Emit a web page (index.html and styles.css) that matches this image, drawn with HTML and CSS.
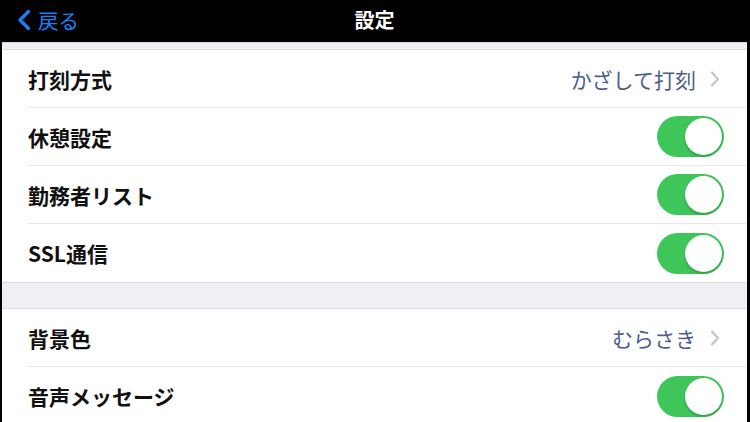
FILE: index.html
```html
<!doctype html>
<html lang="ja">
<head>
    <meta charset="UTF-8">
    <title>設定</title>
    <link rel="stylesheet" href="styles.css">
</head>
<body>
<div class="screen">
    <div class="navBar">
        <div class="backBtn">
            <svg class="backIcon" width="14" height="20" viewBox="0 0 14 20">
                <path d="M11.5 1.5 L3 10 L11.5 18.5" fill="none" stroke="#1b80f5" stroke-width="3.2" stroke-linecap="round" stroke-linejoin="round"/>
            </svg>
            <span>戻る</span>
        </div>
        <div class="navTitle">設定</div>
    </div>

    <div class="gap topGap"></div>
    <ul class="group">
        <li class="row">
            <span class="label">打刻方式</span>
            <span class="value">かざして打刻</span>
            <svg class="chevron" width="10" height="16" viewBox="0 0 10 16">
                <path d="M2 1.5 L8 8 L2 14.5" fill="none" stroke="#c4c4c9" stroke-width="2.2" stroke-linecap="round" stroke-linejoin="round"/>
            </svg>
        </li>
        <li class="row">
            <span class="label">休憩設定</span>
            <span class="toggle"><span class="knob"></span></span>
        </li>
        <li class="row">
            <span class="label">勤務者リスト</span>
            <span class="toggle"><span class="knob"></span></span>
        </li>
        <li class="row">
            <span class="label">SSL通信</span>
            <span class="toggle"><span class="knob"></span></span>
        </li>
    </ul>

    <div class="gap"></div>
    <ul class="group">
        <li class="row">
            <span class="label">背景色</span>
            <span class="value">むらさき</span>
            <svg class="chevron" width="10" height="16" viewBox="0 0 10 16">
                <path d="M2 1.5 L8 8 L2 14.5" fill="none" stroke="#c4c4c9" stroke-width="2.2" stroke-linecap="round" stroke-linejoin="round"/>
            </svg>
        </li>
        <li class="row">
            <span class="label">音声メッセージ</span>
            <span class="toggle"><span class="knob"></span></span>
        </li>
    </ul>
</div>
</body>
</html>
```

FILE: styles.css
```css
* {
    padding: 0;
    margin: 0;
    list-style: none;
    box-sizing: border-box;
}

html, body {
    background-color: #000;
    height: 100%;
    overflow: hidden;
}

body {
    font-family: "Noto Sans CJK JP", "Noto Sans", sans-serif;
}

.screen {
    margin: 0 3px 0 2px;
    height: 100%;
    background-color: #efeff4;
}

.navBar {
    position: relative;
    height: 42px;
    padding-bottom: 3px;
    background-color: #000;
    display: flex;
    align-items: center;
    justify-content: center;
}

.navBar .backBtn {
    position: absolute;
    left: 15px;
    top: 0;
    height: 39px;
    display: flex;
    align-items: center;
    color: #1b80f5;
    font-size: 20.5px;
}

.navBar .backIcon {
    margin-right: 7px;
}

.navTitle {
    color: #fff;
    font-size: 20px;
    font-weight: bold;
}

.gap {
    height: 26px;
    border-bottom: 1px solid #dcdce0;
}

.gap.topGap {
    height: 8px;
    border-top: 1px solid #d8d8dc;
}

.group {
    background-color: #fff;
    border-bottom: 1px solid #dcdce0;
}

.group .row {
    height: 58px;
    margin-left: 26px;
    padding-right: 23px;
    display: flex;
    align-items: center;
    border-bottom: 1px solid #e8e8ec;
}

.group .row:last-child {
    border-bottom: none;
}

.row .label {
    flex: 1;
    font-size: 21px;
    font-weight: bold;
    color: #111;
}

.row .value {
    font-size: 21px;
    color: #4a5d8c;
    margin-right: 14px;
}

.row .chevron {
    margin-right: 4px;
}

.row .toggle {
    position: relative;
    width: 67px;
    height: 41px;
    border-radius: 21px;
    background-color: #3ec65a;
}

.row .toggle .knob {
    position: absolute;
    right: 2px;
    top: 2px;
    width: 37px;
    height: 37px;
    border-radius: 50%;
    background-color: #fff;
    box-shadow: 0 2px 3px rgba(0, 0, 0, .2);
}
```
